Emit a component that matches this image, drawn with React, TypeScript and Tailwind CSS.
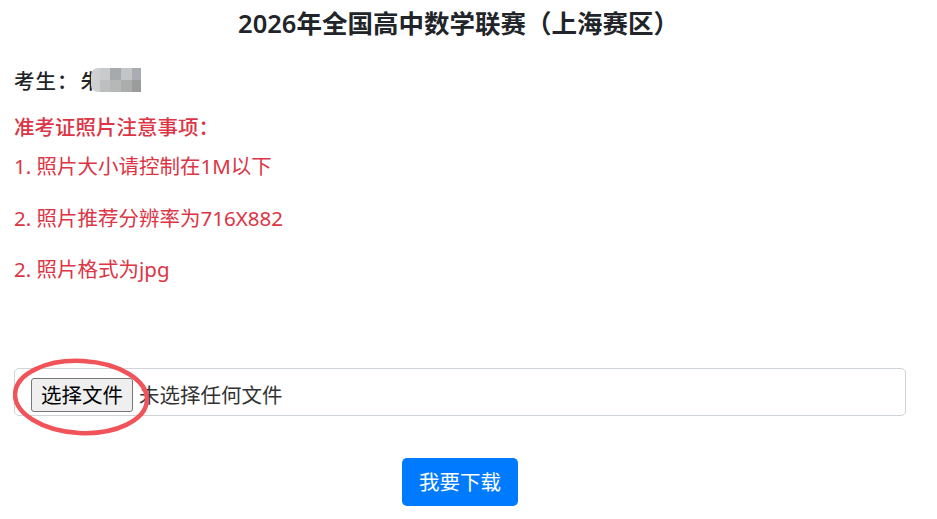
import React from "react";

const font = { fontFamily: '"Noto Sans", "Noto Sans CJK SC", sans-serif' };

export default function App() {
  return (
    <div className="w-[937px] h-[519px] bg-white text-[#212529] overflow-hidden" style={font}>
      <div className="w-[917px]">
        <h4 className="text-center text-[25.5px] font-semibold leading-[30px] pt-[8px] text-[#212529]">
          2026年全国高中数学联赛（上海赛区）
        </h4>
      </div>
      <div className="pl-[14px] w-[920px]">
        <div className="mt-[28px] h-[30px] leading-[30px] text-[20.5px] flex items-center font-medium">
          <span className="tracking-[1px]">考生：</span>
          <span className="relative inline-block ml-[2px]">
            朱
            <span className="absolute left-[10px] top-[2px] flex h-[24px]">
              <span className="w-[9px] h-[24px] bg-[#cfd0d2] rounded-l-[7px]"></span>
              <span className="w-[10px] h-[24px] flex flex-col">
                <span className="h-[12px] bg-[#c8cacc]"></span>
                <span className="h-[12px] bg-[#bcbebf]"></span>
              </span>
              <span className="w-[11px] h-[24px] flex flex-col">
                <span className="h-[12px] bg-[#a6aaad]"></span>
                <span className="h-[12px] bg-[#b6b8b8]"></span>
              </span>
              <span className="w-[11px] h-[24px] flex flex-col">
                <span className="h-[12px] bg-[#c3c4c5]"></span>
                <span className="h-[12px] bg-[#abadad]"></span>
              </span>
              <span className="w-[9px] h-[24px] flex flex-col">
                <span className="h-[12px] bg-[#a9acb0]"></span>
                <span className="h-[12px] bg-[#9a9b9b]"></span>
              </span>
            </span>
          </span>
        </div>
        <div className="text-[#dc3545] text-[20.5px] leading-[30px]">
          <p className="mt-[16px] font-medium">准考证照片注意事项：</p>
          <p className="mt-[9px]">1. 照片大小请控制在1M以下</p>
          <p className="mt-[22px]">2. 照片推荐分辨率为716X882</p>
          <p className="mt-[21px]">2. 照片格式为jpg</p>
        </div>
        <div className="relative mt-[84px] w-[892px] h-[48px] border border-[#ced4da] rounded-[5px] flex items-center pl-[16px] pt-[6px]">
          <span className="h-[34px] px-[9px] flex items-center bg-[#efefef] border border-[#767676] rounded-[3px] text-[20.5px] text-black leading-none">
            选择文件
          </span>
          <span className="ml-[6px] text-[20.5px] text-[#333]">未选择任何文件</span>
          <svg className="absolute left-[-2px] top-[-12px]" width="140" height="80" viewBox="0 0 140 80">
            <ellipse cx="68" cy="40" rx="66" ry="36" fill="none" stroke="#f0545a" strokeWidth="4.5" transform="rotate(3 68 40)" />
          </svg>
        </div>
        <div className="w-[892px] flex justify-center mt-[42px]">
          <button className="h-[48px] w-[116px] bg-[#007bff] text-white text-[20.5px] rounded-[5px]">
            我要下载
          </button>
        </div>
      </div>
    </div>
  );
}
